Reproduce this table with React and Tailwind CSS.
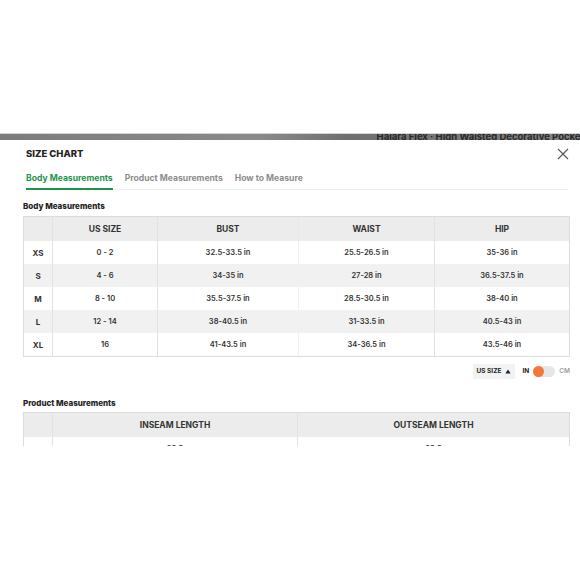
import React, { useState } from 'react';

const rows = [
  ['XS', '0 - 2', '32.5-33.5 in', '25.5-26.5 in', '35-36 in'],
  ['S', '4 - 6', '34-35 in', '27-28 in', '36.5-37.5 in'],
  ['M', '8 - 10', '35.5-37.5 in', '28.5-30.5 in', '38-40 in'],
  ['L', '12 - 14', '38-40.5 in', '31-33.5 in', '40.5-43 in'],
  ['XL', '16', '41-43.5 in', '34-36.5 in', '43.5-46 in'],
];

const tabs = ['Body Measurements', 'Product Measurements', 'How to Measure'];

function App() {
  const [tab, setTab] = useState(0);
  const [cm, setCm] = useState(false);

  return (
    <div className="w-[580px] h-[580px] bg-white overflow-hidden text-[#222]" style={{ fontFamily: 'Inter, "Open Sans", sans-serif' }}>
      <div className="h-[133px]" />
      {/* strip of the product page behind the sheet */}
      <div className="h-[7px] overflow-hidden flex justify-end border-t border-[#d4d4d4] bg-[linear-gradient(90deg,#7c7c7c_0%,#8a8a8a_45%,#6f6f6f_60%,#858585_100%)]">
        <span className="whitespace-nowrap text-[9.5px] leading-[5px] font-bold text-[#2a2a2a] -mr-[4px]">
          Halara Flex · High Waisted Decorative Pocket
        </span>
      </div>

      <div className="h-[306px] overflow-hidden">
        <div className="flex items-center justify-between pl-[26px] pr-[11px] pt-[7px]">
          <h1 className="text-[9.5px] leading-[14px] font-extrabold">SIZE CHART</h1>
          <button className="text-[#555]">
            <svg width="12" height="12" viewBox="0 0 12 12" fill="none" stroke="currentColor" strokeWidth="1.1">
              <path d="M1 1L11 11M11 1L1 11" />
            </svg>
          </button>
        </div>

        <div className="mx-[26px] mr-[12px] mt-[11px] flex gap-[12px] border-b border-[#ededed]">
          {tabs.map((t, i) => (
            <button
              key={t}
              onClick={() => setTab(i)}
              className={
                i === tab
                  ? 'text-[8.6px] leading-[12px] font-bold text-[#1e9448] pb-[4px] border-b-2 border-[#1e9448] -mb-px'
                  : 'text-[8.6px] leading-[12px] font-bold text-[#8c8c8c] pb-[4px] border-b-2 border-transparent -mb-px'
              }
            >
              {t}
            </button>
          ))}
        </div>

        <div className="px-[23px] pr-[10px]">
          <h2 className="mt-[11px] text-[8px] leading-[10px] font-extrabold">Body Measurements</h2>
          <div className="mt-[5px] border border-[#dcdcdc] text-[7.5px] font-semibold text-[#333]">
            <div className="grid grid-cols-[29px_105px_141px_136px_1fr] h-[24px] bg-[#ececec] text-[8.5px] font-bold items-stretch">
              <div className="border-r border-[#e2e2e2]" />
              <div className="flex items-center justify-center border-r border-[#e2e2e2]">US SIZE</div>
              <div className="flex items-center justify-center border-r border-[#e8e8e8]">BUST</div>
              <div className="flex items-center justify-center border-r border-[#e2e2e2]">WAIST</div>
              <div className="flex items-center justify-center">HIP</div>
            </div>
            {rows.map((r, i) => (
              <div
                key={r[0]}
                className={
                  i % 2 === 1
                    ? 'grid grid-cols-[29px_105px_141px_136px_1fr] h-[23px] bg-[#f1f1f1]'
                    : 'grid grid-cols-[29px_105px_141px_136px_1fr] h-[23px] bg-white'
                }
              >
                <div className="flex items-center justify-center border-r border-[#e2e2e2] font-bold text-[8px]">{r[0]}</div>
                <div className="flex items-center justify-center border-r border-[#e2e2e2]">{r[1]}</div>
                <div className="flex items-center justify-center border-r border-[#f0f0f0]">{r[2]}</div>
                <div className="flex items-center justify-center border-r border-[#e2e2e2]">{r[3]}</div>
                <div className="flex items-center justify-center">{r[4]}</div>
              </div>
            ))}
          </div>

          <div className="flex items-center justify-end gap-[7px] mt-[7px]">
            <button className="h-[15px] px-[4px] bg-[#f2f2f2] flex items-center gap-[4px] text-[6.5px] font-bold">
              US SIZE
              <svg width="6" height="5" viewBox="0 0 6 5"><path d="M3 0.5L5.6 4.5H0.4Z" fill="#222" /></svg>
            </button>
            <div className="flex items-center gap-[4px] text-[6.5px] font-bold">
              <span className="text-[#222]">IN</span>
              <button
                onClick={() => setCm(!cm)}
                className={cm ? 'w-[22px] h-[11px] rounded-full bg-[#e6e6e6] flex items-center justify-end' : 'w-[22px] h-[11px] rounded-full bg-[#e6e6e6] flex items-center justify-start'}
              >
                <span className="w-[11px] h-[11px] rounded-full bg-[#f4763b]" />
              </button>
              <span className="text-[#9a9a9a] font-semibold">CM</span>
            </div>
          </div>

          <h2 className="mt-[19px] text-[8px] leading-[10px] font-extrabold">Product Measurements</h2>
          <div className="mt-[4px] border border-[#dcdcdc] text-[7.5px] font-semibold text-[#333]">
            <div className="grid grid-cols-[29px_245px_1fr] h-[24px] bg-[#ececec] text-[8.5px] font-bold">
              <div className="border-r border-[#e2e2e2]" />
              <div className="flex items-center justify-center border-r border-[#e2e2e2]">INSEAM LENGTH</div>
              <div className="flex items-center justify-center">OUTSEAM LENGTH</div>
            </div>
            <div className="grid grid-cols-[29px_245px_1fr] h-[23px] bg-white">
              <div className="flex items-center justify-center border-r border-[#e2e2e2] font-bold text-[8px]">XS</div>
              <div className="flex items-center justify-center border-r border-[#e2e2e2]">28.5</div>
              <div className="flex items-center justify-center">38.5</div>
            </div>
          </div>
        </div>
      </div>
    </div>
  );
}

export default App;
